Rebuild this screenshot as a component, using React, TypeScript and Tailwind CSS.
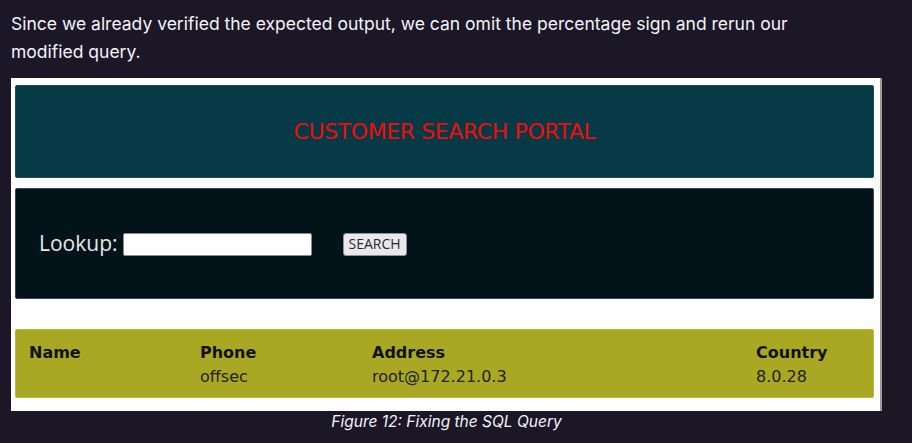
import React from 'react';

const rows = [{ name: '', phone: 'offsec', address: 'root@172.21.0.3', country: '8.0.28' }];

const App: React.FC = () => {
  return (
    <div className="w-[912px] h-[443px] bg-[#1c1727] overflow-hidden pl-[11px] pt-[10px] font-['Inter','Liberation_Sans',sans-serif]">
      <p className="w-[840px] text-[17.5px] leading-[28px] text-[#f4f3f7]">
        Since we already verified the expected output, we can omit the percentage sign and rerun our modified query.
      </p>

      <div className="mt-[12px] w-[871px] h-[333px] bg-white border-r-2 border-[#9a9a9a] pl-[4px] pr-[6px] pt-[7px] flex flex-col font-['DejaVu_Sans',sans-serif]">
        <div className="h-[93px] bg-[#053a46] rounded-[2px] border border-[#1d4d58] flex items-center justify-center">
          <span className="text-[22px] text-[#ee0d0d] tracking-[-0.4px]">CUSTOMER SEARCH PORTAL</span>
        </div>

        <div className="mt-[10px] h-[111px] bg-[#03131a] rounded-[2px] border border-[#3a474c] flex items-center pl-[23px] pt-[1px] font-['Open_Sans','Noto_Sans',sans-serif]">
          <span className="text-[21px] text-[#e8e8e8]">Lookup:</span>
          <input
            type="text"
            className="ml-[5px] w-[189px] h-[23px] bg-white border border-[#8a8a8a] rounded-[2px]"
          />
          <button className="ml-[31px] h-[23px] px-[5px] bg-[#e9e9ed] border border-[#8f8f9d] rounded-[3px] text-[14px] text-[#2a2a2a] leading-none">
            SEARCH
          </button>
        </div>

        <div className="mt-[30px] h-[69px] bg-[#a8a823] rounded-[2px] border border-[#b8b84a] pl-[13px] pt-[11px]">
          <div className="grid grid-cols-[171px_172px_384px_1fr] text-[16px] leading-[24px] text-[#111]">
            <span className="font-bold">Name</span>
            <span className="font-bold">Phone</span>
            <span className="font-bold">Address</span>
            <span className="font-bold">Country</span>
            {rows.map((r, i) => (
              <React.Fragment key={i}>
                <span className="text-[#222]">{r.name}</span>
                <span className="text-[#222]">{r.phone}</span>
                <span className="text-[#222]">{r.address}</span>
                <span className="text-[#222]">{r.country}</span>
              </React.Fragment>
            ))}
          </div>
        </div>
      </div>

      <p className="w-[871px] mt-[1px] text-center italic text-[15.5px] leading-[20px] text-[#f4f3f7]">
        Figure 12: Fixing the SQL Query
      </p>
    </div>
  );
};

export default App;
